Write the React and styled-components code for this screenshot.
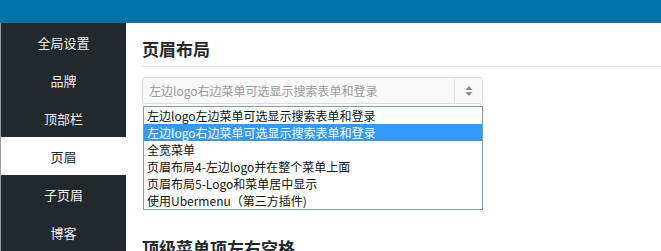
import React from 'react'
import styled, { createGlobalStyle } from 'styled-components'

const GlobalStyle = createGlobalStyle`
  html, body {
    margin: 0;
    padding: 0;
    background: #fff;
    font-family: "Noto Sans CJK SC", "Noto Sans", sans-serif;
  }
`

const navItems = ['全局设置', '品牌', '顶部栏', '页眉', '子页眉', '博客']

const layoutOptions = [
  '左边logo左边菜单可选显示搜索表单和登录',
  '左边logo右边菜单可选显示搜索表单和登录',
  '全宽菜单',
  '页眉布局4-左边logo并在整个菜单上面',
  '页眉布局5-Logo和菜单居中显示',
  '使用Ubermenu（第三方插件)'
]

const Page = styled.div`
  width: 661px;
  height: 251px;
  overflow: hidden;
  display: flex;
  flex-direction: column;
`

const TopBar = styled.div`
  height: 23px;
  background: #0073aa;
  flex-shrink: 0;
`

const Body = styled.div`
  flex: 1;
  display: flex;
`

const Sidebar = styled.nav`
  width: 125px;
  background: #23282d;
  border-left: 1px solid #9a9ea2;
  display: flex;
  flex-direction: column;
  flex-shrink: 0;
`

const NavItem = styled.div`
  height: 38px;
  display: flex;
  align-items: center;
  justify-content: center;
  font-size: 13px;
  color: ${p => (p.$active ? '#23282d' : '#eee')};
  background: ${p => (p.$active ? '#fff' : 'transparent')};
`

const Main = styled.main`
  flex: 1;
  padding: 14px 0 0 16px;
`

const Heading = styled.h2`
  margin: 0;
  padding-bottom: 5px;
  font-size: 17px;
  line-height: 24px;
  font-weight: 700;
  color: #23282d;
  border-bottom: ${p => (p.$ruled ? '1px solid #e5e5e5' : 'none')};
`

const SelectWrap = styled.div`
  position: relative;
  width: 341px;
  margin-top: 10px;
`

const SelectBox = styled.div`
  height: 25px;
  border: 1px solid #ddd;
  border-radius: 3px;
  background: #f9f9f9;
  display: flex;
  align-items: center;
`

const SelectValue = styled.div`
  flex: 1;
  padding-left: 6px;
  font-size: 12px;
  color: #999;
`

const SelectArrow = styled.div`
  width: 27px;
  height: 100%;
  border-left: 1px solid #e2e2e2;
  display: flex;
  align-items: center;
  justify-content: center;
`

const OptionList = styled.ul`
  position: absolute;
  top: 29px;
  left: 1px;
  width: 338px;
  margin: 0;
  padding: 0;
  list-style: none;
  background: #fff;
  border: 1px solid #7f9db9;
  z-index: 2;
`

const Option = styled.li`
  height: 17px;
  line-height: 17px;
  padding-left: 3px;
  font-size: 12px;
  color: ${p => (p.$selected ? '#fff' : '#111')};
  background: ${p => (p.$selected ? '#3399ff' : 'transparent')};
  white-space: nowrap;
`

const NextSection = styled.div`
  margin-top: 132px;
`

const Arrows = () => (
  <svg width="8" height="12" viewBox="0 0 8 12">
    <path d="M4 1 L7.5 5 L0.5 5 Z" fill="#888" />
    <path d="M4 11 L7.5 7 L0.5 7 Z" fill="#888" />
  </svg>
)

export default function App() {
  return (
    <Page>
      <GlobalStyle />
      <TopBar />
      <Body>
        <Sidebar>
          {navItems.map(item => (
            <NavItem key={item} $active={item === '页眉'}>
              {item}
            </NavItem>
          ))}
        </Sidebar>
        <Main>
          <Heading $ruled>页眉布局</Heading>
          <SelectWrap>
            <SelectBox>
              <SelectValue>左边logo右边菜单可选显示搜索表单和登录</SelectValue>
              <SelectArrow>
                <Arrows />
              </SelectArrow>
            </SelectBox>
            <OptionList>
              {layoutOptions.map((opt, i) => (
                <Option key={opt} $selected={i === 1}>
                  {opt}
                </Option>
              ))}
            </OptionList>
          </SelectWrap>
          <NextSection>
            <Heading>顶级菜单项左右空格</Heading>
          </NextSection>
        </Main>
      </Body>
    </Page>
  )
}
